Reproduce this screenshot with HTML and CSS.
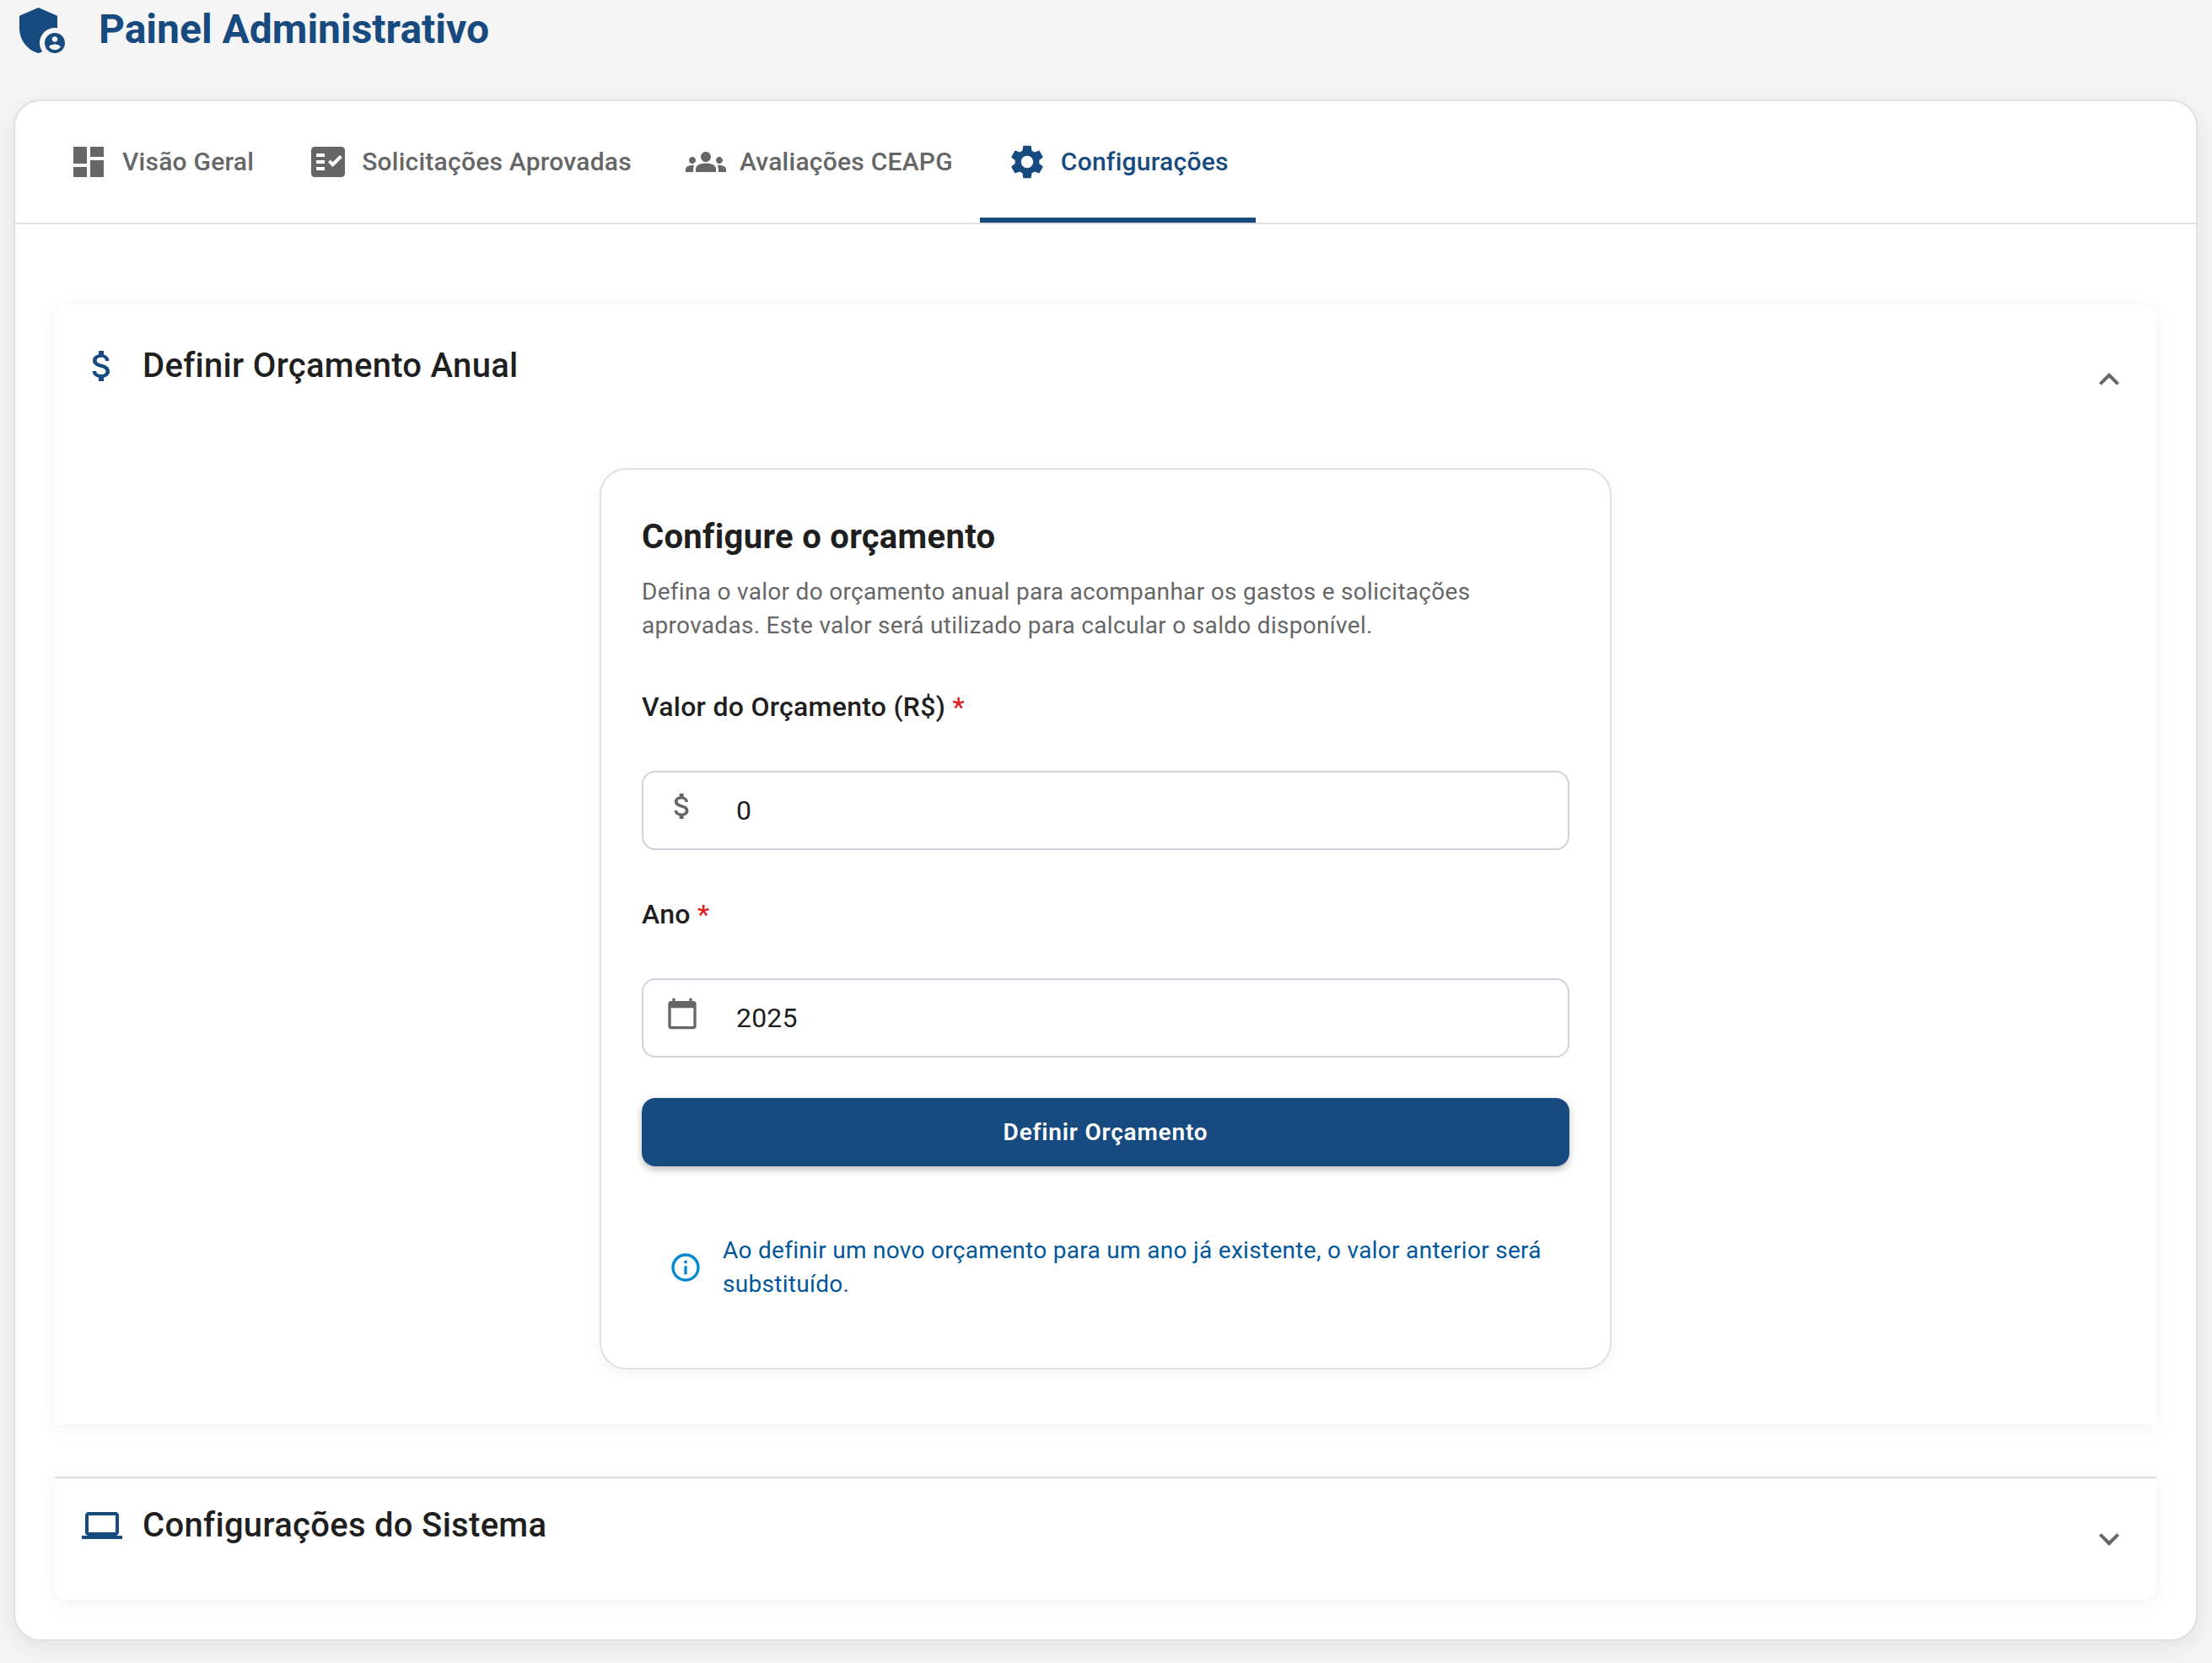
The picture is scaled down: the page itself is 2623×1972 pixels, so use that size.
FILE: index.html
```html
<!DOCTYPE html>
<html lang="pt-BR">
<head>
<meta charset="utf-8">
<title>Painel Administrativo</title>
<link rel="stylesheet" href="styles.css">
</head>
<body>
<header class="page-header">
  <svg class="logo" viewBox="0 0 24 24"><path d="M17 11c.34 0 .67.04 1 .09V6.27L10.5 3 3 6.27v4.91c0 4.54 3.2 8.79 7.5 9.82.55-.13 1.08-.32 1.6-.55-.69-.98-1.1-2.17-1.1-3.45 0-3.31 2.69-6 6-6z"/><path d="M17 13c-2.21 0-4 1.79-4 4s1.79 4 4 4 4-1.79 4-4-1.79-4-4-4zm0 1.38c.62 0 1.12.51 1.12 1.12s-.51 1.12-1.12 1.12-1.12-.51-1.12-1.12.5-1.12 1.12-1.12zm0 5.37c-.93 0-1.74-.46-2.24-1.17.05-.72 1.51-1.08 2.24-1.08s2.19.36 2.24 1.08c-.5.71-1.31 1.17-2.24 1.17z"/></svg>
  <h1 class="page-title">Painel Administrativo</h1>
</header>
<main class="panel">
  <nav class="tabs">
    <a class="tab">
      <svg class="tab-icon" viewBox="0 0 24 24"><path d="M3 13h8V3H3v10zm0 8h8v-6H3v6zm10 0h8V11h-8v10zm0-18v6h8V3h-8z"/></svg>
      <span class="tab-label">Visão Geral</span>
    </a>
    <a class="tab">
      <svg class="tab-icon" viewBox="0 0 24 24"><path fill-rule="evenodd" d="M20 3H4c-1.1 0-2 .9-2 2v14c0 1.1.9 2 2 2h16c1.1 0 2-.9 2-2V5c0-1.1-.9-2-2-2zM10 17H5v-2h5v2zm0-4H5v-2h5v2zm0-4H5V7h5v2zm4.82 6L12 12.17l1.41-1.41 1.41 1.42L18.99 8l1.42 1.42L14.82 15z"/></svg>
      <span class="tab-label">Solicitações Aprovadas</span>
    </a>
    <a class="tab">
      <svg class="tab-icon" viewBox="0 0 24 24"><path d="M12 12.75c1.63 0 3.07.39 4.24.9 1.08.48 1.76 1.56 1.76 2.73V18H6v-1.61c0-1.18.68-2.26 1.76-2.73 1.17-.52 2.61-.91 4.24-.91zM4 13c1.1 0 2-.9 2-2s-.9-2-2-2-2 .9-2 2 .9 2 2 2zm1.13 1.1c-.37-.06-.74-.1-1.13-.1-.99 0-1.93.21-2.78.58C.48 14.9 0 15.62 0 16.43V18h4.5v-1.61c0-.83.23-1.61.63-2.29zM20 13c1.1 0 2-.9 2-2s-.9-2-2-2-2 .9-2 2 .9 2 2 2zm4 3.43c0-.81-.48-1.53-1.22-1.85-.85-.37-1.79-.58-2.78-.58-.39 0-.76.04-1.13.1.4.68.63 1.46.63 2.29V18H24v-1.57zM12 6c1.66 0 3 1.34 3 3s-1.34 3-3 3-3-1.34-3-3 1.34-3 3-3z"/></svg>
      <span class="tab-label">Avaliações CEAPG</span>
    </a>
    <a class="tab tab-active">
      <svg class="tab-icon" viewBox="0 0 24 24"><path d="M19.14 12.94c.04-.3.06-.61.06-.94 0-.32-.02-.64-.07-.94l2.03-1.58c.18-.14.23-.41.12-.61l-1.92-3.32c-.12-.22-.37-.29-.59-.22l-2.39.96c-.5-.38-1.03-.7-1.62-.94l-.36-2.54c-.04-.24-.24-.41-.48-.41h-3.84c-.24 0-.43.17-.47.41l-.36 2.54c-.59.24-1.13.57-1.62.94l-2.39-.96c-.22-.08-.47 0-.59.22L2.74 8.87c-.12.21-.08.47.12.61l2.03 1.58c-.05.3-.09.63-.09.94s.02.64.07.94l-2.03 1.58c-.18.14-.23.41-.12.61l1.92 3.32c.12.22.37.29.59.22l2.39-.96c.5.38 1.03.7 1.62.94l.36 2.54c.05.24.24.41.48.41h3.84c.24 0 .44-.17.47-.41l.36-2.54c.59-.24 1.13-.56 1.62-.94l2.39.96c.22.08.47 0 .59-.22l1.92-3.32c.12-.22.07-.47-.12-.61l-2.01-1.58zM12 15.6c-1.98 0-3.6-1.62-3.6-3.6s1.62-3.6 3.6-3.6 3.6 1.62 3.6 3.6-1.62 3.6-3.6 3.6z"/></svg>
      <span class="tab-label">Configurações</span>
    </a>
  </nav>
  <div class="panel-body">
    <section class="accordion accordion-open">
      <div class="accordion-head accordion-head-open">
        <div class="accordion-title">
          <svg class="accordion-icon" viewBox="0 0 24 24"><path d="M11.8 10.9c-2.27-.59-3-1.2-3-2.15 0-1.09 1.01-1.85 2.7-1.85 1.78 0 2.44.85 2.5 2.1h2.21c-.07-1.72-1.12-3.3-3.21-3.81V3h-3v2.16c-1.94.42-3.5 1.68-3.5 3.61 0 2.31 1.91 3.46 4.7 4.13 2.5.6 3 1.48 3 2.41 0 .69-.49 1.79-2.7 1.79-2.06 0-2.87-.92-2.98-2.1h-2.2c.12 2.19 1.76 3.42 3.68 3.83V21h3v-2.15c1.95-.37 3.5-1.5 3.5-3.55 0-2.84-2.43-3.81-4.7-4.4z"/></svg>
          <h2 class="accordion-text">Definir Orçamento Anual</h2>
        </div>
        <svg class="chevron" viewBox="0 0 24 24"><path d="M12 8l-6 6 1.41 1.41L12 10.83l4.59 4.58L18 14z"/></svg>
      </div>
      <div class="accordion-details">
        <form class="budget-card">
          <h3 class="budget-title">Configure o orçamento</h3>
          <p class="budget-desc">Defina o valor do orçamento anual para acompanhar os gastos e solicitações aprovadas. Este valor será utilizado para calcular o saldo disponível.</p>
          <div class="field-label">Valor do Orçamento (R$) <span class="required">*</span></div>
          <div class="input-box">
            <svg class="input-icon" viewBox="0 0 24 24"><path d="M11.8 10.9c-2.27-.59-3-1.2-3-2.15 0-1.09 1.01-1.85 2.7-1.85 1.78 0 2.44.85 2.5 2.1h2.21c-.07-1.72-1.12-3.3-3.21-3.81V3h-3v2.16c-1.94.42-3.5 1.68-3.5 3.61 0 2.31 1.91 3.46 4.7 4.13 2.5.6 3 1.48 3 2.41 0 .69-.49 1.79-2.7 1.79-2.06 0-2.87-.92-2.98-2.1h-2.2c.12 2.19 1.76 3.42 3.68 3.83V21h3v-2.15c1.95-.37 3.5-1.5 3.5-3.55 0-2.84-2.43-3.81-4.7-4.4z"/></svg>
            <span class="input-value">0</span>
          </div>
          <div class="field-label">Ano <span class="required">*</span></div>
          <div class="input-box">
            <svg class="input-icon" viewBox="0 0 24 24"><path d="M20 3h-1V1h-2v2H7V1H5v2H4c-1.1 0-2 .9-2 2v16c0 1.1.9 2 2 2h16c1.1 0 2-.9 2-2V5c0-1.1-.9-2-2-2zm0 18H4V8h16v13z"/></svg>
            <span class="input-value">2025</span>
          </div>
          <button class="submit" type="button">Definir Orçamento</button>
          <div class="info">
            <svg class="info-icon" viewBox="0 0 24 24"><path d="M11 7h2v2h-2zm0 4h2v6h-2zm1-9C6.48 2 2 6.48 2 12s4.48 10 10 10 10-4.48 10-10S17.52 2 12 2zm0 18c-4.41 0-8-3.59-8-8s3.59-8 8-8 8 3.59 8 8-3.59 8-8 8z"/></svg>
            <p class="info-text">Ao definir um novo orçamento para um ano já existente, o valor anterior será substituído.</p>
          </div>
        </form>
      </div>
    </section>
    <section class="accordion accordion-closed">
      <div class="accordion-head">
        <div class="accordion-title">
          <svg class="accordion-icon" viewBox="0 0 24 24"><path d="M20 18c1.1 0 1.99-.9 1.99-2L22 6c0-1.1-.9-2-2-2H4c-1.1 0-2 .9-2 2v10c0 1.1.9 2 2 2H0v2h24v-2h-4zM4 6h16v10H4V6z"/></svg>
          <h2 class="accordion-text">Configurações do Sistema</h2>
        </div>
        <svg class="chevron" viewBox="0 0 24 24"><path d="M16.59 8.59 12 13.17 7.41 8.59 6 10l6 6 6-6z"/></svg>
      </div>
    </section>
  </div>
</main>
</body>
</html>
```

FILE: styles.css
```css
* { box-sizing: border-box; }
html, body { margin: 0; padding: 0; }
body {
  height: 1972px;
  overflow: hidden;
  background: #f5f5f5;
  font-family: Roboto, "Noto Sans", sans-serif;
  color: #1f1f1f;
}
.page-header {
  display: flex;
  align-items: center;
  gap: 31px;
  height: 72px;
  padding-left: 14px;
  margin-bottom: 46px;
}
.logo { width: 72px; height: 72px; fill: #174a7e; flex: none; }
.page-title {
  margin: 0 0 2px;
  font-size: 48px;
  line-height: 68px;
  font-weight: 700;
  color: #174a7e;
}
.panel {
  margin: 0 17px 0 16px;
  height: 1828px;
  background: #fff;
  border: 2px solid #e0e0e0;
  border-radius: 32px;
  box-shadow: 0 8px 32px rgba(0, 0, 0, 0.08);
}
.tabs {
  display: flex;
  height: 146px;
  padding-left: 31px;
  border-bottom: 2px solid #e0e0e0;
}
.tab {
  display: flex;
  align-items: center;
  gap: 16px;
  height: 144px;
  padding: 0 32px;
  font-size: 30px;
  font-weight: 500;
  letter-spacing: 0.24px;
  color: #666;
  fill: #666;
}
.tab-label { margin-bottom: 2px; }
.tab-active {
  color: #174a7e;
  fill: #174a7e;
  border-bottom: 6px solid #174a7e;
  padding-top: 6px;
}
.tab-icon { width: 48px; height: 48px; flex: none; }
.panel-body { padding: 96px 47px 46px; }
.accordion { background: #fff; box-shadow: 0 4px 24px rgba(0, 0, 0, 0.06); }
.accordion-open { border-radius: 16px 16px 0 0; height: 1327px; }
.accordion-closed {
  margin-top: 62px;
  border-top: 2px solid #d9d9d9;
  border-radius: 0 0 16px 16px;
  height: 146px;
}
.accordion-head {
  display: flex;
  align-items: center;
  justify-content: space-between;
  height: 144px;
  padding: 0 32px;
}
.accordion-head-open { height: 176px; }
.accordion-title { display: flex; align-items: center; gap: 24px; margin-bottom: 32px; }
.accordion-icon { width: 48px; height: 48px; fill: #174a7e; flex: none; }
.accordion-text {
  margin: 0;
  font-size: 40px;
  line-height: 48px;
  font-weight: 500;
  letter-spacing: 0.3px;
  color: #1f1f1f;
}
.chevron { width: 48px; height: 48px; fill: #666; flex: none; }
.accordion-details { display: flex; justify-content: center; padding-top: 17px; }
.budget-card {
  width: 1200px;
  height: 1069px;
  padding: 50px 48px 0;
  background: #fff;
  border: 2px solid #e0e0e0;
  border-radius: 32px;
  box-shadow: 0 4px 16px rgba(0, 0, 0, 0.05);
}
.budget-title {
  margin: 0 0 15px;
  font-size: 40px;
  line-height: 60px;
  font-weight: 700;
  letter-spacing: 0.3px;
  color: #1f1f1f;
}
.budget-desc {
  margin: 0;
  font-size: 28px;
  line-height: 40px;
  letter-spacing: 0.3px;
  color: #666;
}
.field-label {
  margin: 52px 0;
  font-size: 32px;
  line-height: 48px;
  font-weight: 500;
  letter-spacing: 0.28px;
  color: #1f1f1f;
}
.required { color: #e01b1b; }
.input-box {
  display: flex;
  align-items: center;
  gap: 44px;
  height: 94px;
  padding-left: 26px;
  border: 2px solid #ccd2d8;
  border-radius: 16px;
}
.input-icon { width: 40px; height: 40px; fill: #666; flex: none; margin-bottom: 10px; }
.input-value { font-size: 32px; letter-spacing: 0.2px; color: #1f1f1f; }
.submit {
  display: block;
  width: 100%;
  height: 81px;
  margin-top: 48px;
  border: 0;
  border-radius: 16px;
  background: #174a7e;
  color: #fff;
  font-family: inherit;
  font-size: 28px;
  font-weight: 600;
  letter-spacing: 0.8px;
  box-shadow: 0 4px 8px rgba(0, 0, 0, 0.25);
}
.info {
  display: flex;
  align-items: center;
  gap: 24px;
  margin-top: 80px;
  padding: 0 32px;
}
.info-icon { width: 40px; height: 40px; fill: #0288d1; flex: none; }
.info-text {
  margin: 0;
  font-size: 28px;
  line-height: 40px;
  letter-spacing: 0.3px;
  color: #01579b;
}
```
